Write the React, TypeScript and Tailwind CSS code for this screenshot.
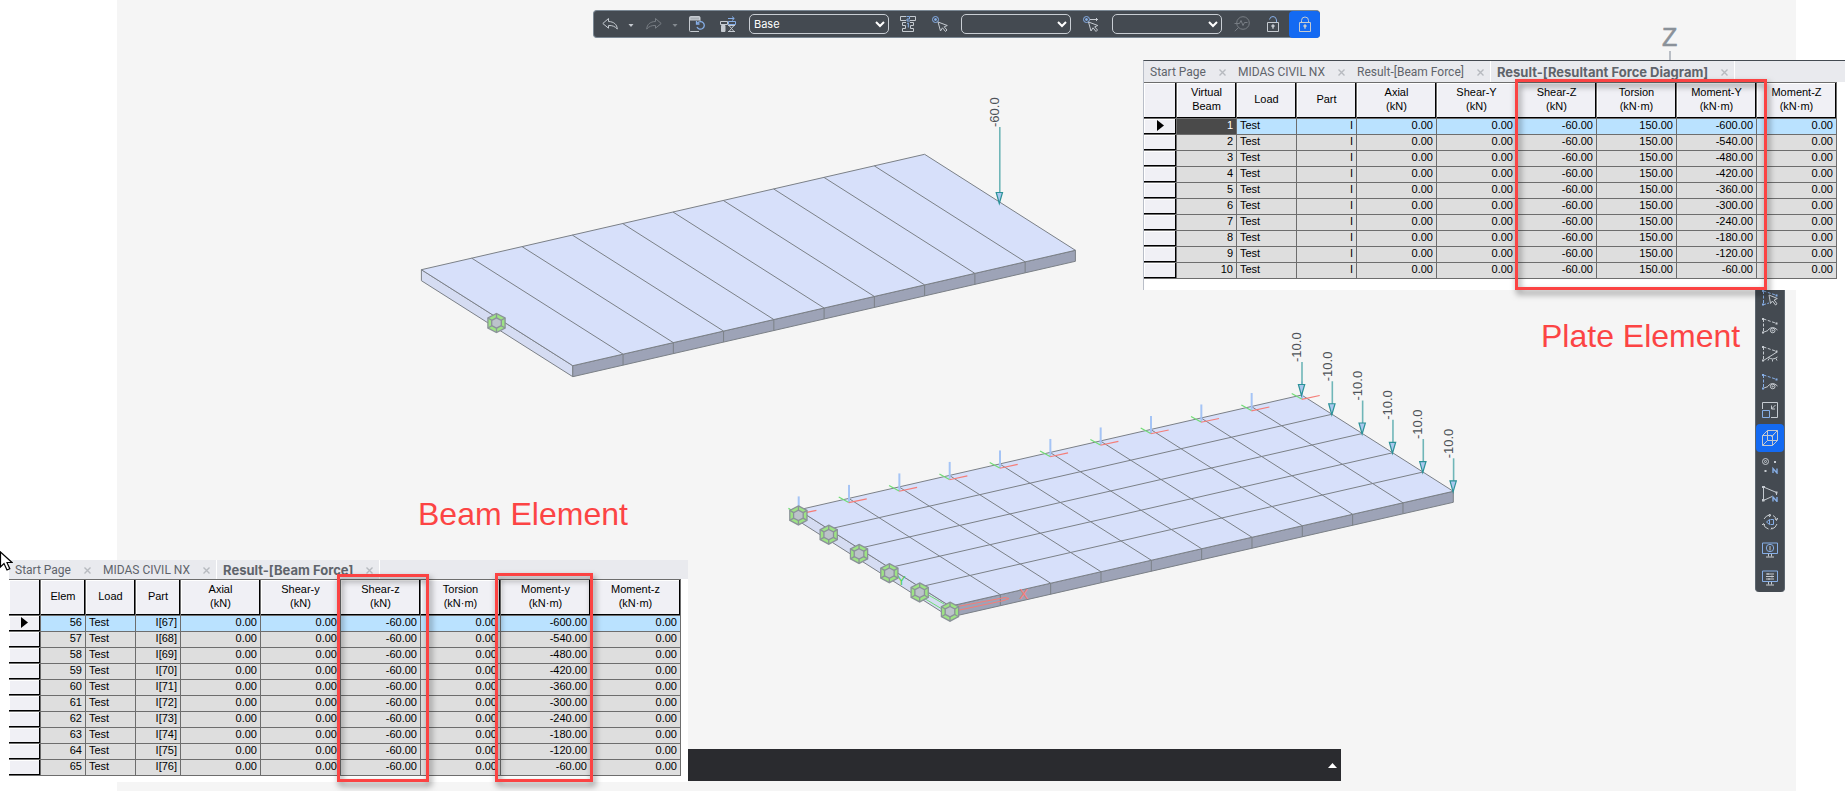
import type { ReactNode } from "react"
import clsx from "clsx"

interface IColumn {
  title: string
  unit?: string
  width: string
  align?: string
}

interface IResultTableProps {
  label: string
  columns: IColumn[]
  rows: string[][]
  headWidth: string
  darkFirstCell?: boolean
}

interface ITabsProps {
  tabs: string[]
  active: string
}

interface IPoint {
  x: number
  y: number
}

const moments = ["-600.00", "-540.00", "-480.00", "-420.00", "-360.00", "-300.00", "-240.00", "-180.00", "-120.00", "-60.00"]

const beamColumns: IColumn[] = [
  { title: "Elem", width: "w-[45px]" },
  { title: "Load", width: "w-[50px]", align: "text-left" },
  { title: "Part", width: "w-[45px]" },
  { title: "Axial", unit: "(kN)", width: "w-20" },
  { title: "Shear-y", unit: "(kN)", width: "w-20" },
  { title: "Shear-z", unit: "(kN)", width: "w-20" },
  { title: "Torsion", unit: "(kN·m)", width: "w-20" },
  { title: "Moment-y", unit: "(kN·m)", width: "w-[90px]" },
  { title: "Moment-z", unit: "(kN·m)", width: "w-[90px]" },
]

const plateColumns: IColumn[] = [
  { title: "Virtual", unit: "Beam", width: "w-[60px]" },
  { title: "Load", width: "w-[60px]", align: "text-left" },
  { title: "Part", width: "w-[60px]" },
  { title: "Axial", unit: "(kN)", width: "w-20" },
  { title: "Shear-Y", unit: "(kN)", width: "w-20" },
  { title: "Shear-Z", unit: "(kN)", width: "w-20" },
  { title: "Torsion", unit: "(kN·m)", width: "w-20" },
  { title: "Moment-Y", unit: "(kN·m)", width: "w-20" },
  { title: "Moment-Z", unit: "(kN·m)", width: "w-20" },
]

const beamRows = moments.map((m, i) => [`${56 + i}`, "Test", `I[${67 + i}]`, "0.00", "0.00", "-60.00", "0.00", m, "0.00"])
const plateRows = moments.map((m, i) => [`${i + 1}`, "Test", "I", "0.00", "0.00", "-60.00", "150.00", m, "0.00"])

const headEdge = "bg-[#f0f0f5] border-r border-b border-[#6d6d6d] shadow-[inset_-1px_-1px_0_#000,inset_1px_1px_0_#fff]"

const ResultTable = ({ label, columns, rows, headWidth, darkFirstCell }: IResultTableProps) => {
  return (
    <table
      aria-label={label}
      className="table-fixed border-separate border-spacing-0 border-t border-[#6d6d6d] font-['Liberation_Sans',Arial,sans-serif] text-[11px]/[14px] text-black"
    >
      <colgroup>
        <col className={headWidth} />
        {columns.map((c) => <col key={c.title} className={c.width} />)}
      </colgroup>
      <thead>
        <tr className="h-9">
          <th className={headEdge} />
          {columns.map((c) => (
            <th key={c.title} className={clsx("px-0 pt-0 pb-[3px] font-normal text-center align-middle", headEdge)}>
              {c.title}
              {c.unit && <span className="block">{c.unit}</span>}
            </th>
          ))}
        </tr>
      </thead>
      <tbody>
        {rows.map((row, i) => (
          <tr key={row[0]} className={clsx("h-4", i === 0 ? "bg-[#bae2ff]" : "bg-[#dedede]")}>
            <th className={clsx("px-0 pt-0 pb-0.5", headEdge)}>
              {i === 0 && (
                <svg viewBox="0 0 6 10" preserveAspectRatio="none" className="mx-auto h-[11px] w-[7px]"><path d="M0 0L6 5L0 10Z" /></svg>
              )}
            </th>
            {row.map((value, j) => (
              <td
                key={j}
                className={clsx(
                  "h-4 border-r border-b border-[#6d6d6d] px-[3px] pt-0 pb-0.5 leading-[13px]",
                  columns[j].align ?? "text-right",
                  darkFirstCell && i === 0 && j === 0 && "bg-[#4a4a4a] text-white",
                )}
              >
                {value}
              </td>
            ))}
          </tr>
        ))}
      </tbody>
    </table>
  )
}

const Tabs = ({ tabs, active }: ITabsProps) => {
  return (
    <div role="tablist" className="flex grow items-stretch bg-[#e9eaee] text-[#5f646b]">
      {tabs.map((tab) => (
        <div
          key={tab}
          className={clsx(
            "flex items-center gap-[13px] px-1.5",
            tab === active ? "border-x border-white font-[Inter,sans-serif] text-[13px]/[18px] font-bold" : "font-[Roboto,sans-serif] text-[12px]/[18px]",
          )}
        >
          <button role="tab" aria-selected={tab === active} className="whitespace-nowrap">{tab}</button>
          <button aria-label={`Close ${tab}`} className="mt-0.5 text-[#b7babf]">
            <svg viewBox="0 0 7 7" className="size-[7px]" fill="none" stroke="currentColor" strokeWidth="1.4">
              <path d="M.5 .5L6.5 6.5M6.5 .5L.5 6.5" />
            </svg>
          </button>
        </div>
      ))}
    </div>
  )
}

const Highlight = ({ className }: { className: string }) => (
  <div className={clsx("absolute border-3 border-[#fb4343] drop-shadow-[2px_4px_3px_rgba(0,0,0,0.5)]", className)} />
)

const Icon = ({ children }: { children: ReactNode }) => (
  <svg viewBox="0 0 16 16" className="size-4" fill="none" stroke="#c5cad0" strokeWidth="1">{children}</svg>
)

const blue = "#86aee6"

const UndoPath = () => <path d="M6.500 2.500L.8 7.500L6.500 12.200V9.500C10.500 9.300 13 10.500 15.300 13C15 8.500 12 5.700 6.500 5.500Z" />

const ToolButton = ({ label, className, children }: { label: string; className?: string; children: ReactNode }) => (
  <button aria-label={label} className={clsx("shrink-0", className)}>{children}</button>
)

const Caret = ({ className, label }: { className: string; label: string }) => (
  <button aria-label={label} className={clsx("w-2 shrink-0", className)}>
    <svg viewBox="0 0 8 5" className="mx-auto mt-0.5 h-[5px] w-2" fill="currentColor"><path d="M1.500 1H6.500L4 4Z" /></svg>
  </button>
)

const selectStyle = "h-5 shrink-0 rounded-[5px] border border-[#c9ced4] bg-[#444a51] text-[11px]/[18px] text-white"

const Toolbar = () => {
  return (
    <header className="mx-auto mt-2.5 flex h-7 w-[727px] items-center rounded-[4px] border-y border-l border-[#7b8894] bg-[#444a51] font-[Inter,sans-serif]">
      <ToolButton label="Undo" className="ml-2"><Icon><UndoPath /></Icon></ToolButton>
      <Caret label="Undo history" className="ml-[9px] text-[#c5cad0]" />
      <ToolButton label="Redo" className="ml-[11px] -scale-x-100 opacity-40"><Icon><UndoPath /></Icon></ToolButton>
      <Caret label="Redo history" className="ml-[9px] text-[#83898f]" />
      <ToolButton label="Refresh model" className="ml-2.5">
        <Icon>
          <path d="M1 1H10.500V4H1Z" fill="#a9afb5" />
          <path d="M11 5V1.500Q11 .5 10 .5H1.500Q.5 .5 .5 1.500V14.500Q.5 15.500 1.500 15.500H10" />
          <path d="M8 11A3.800 3.800 0 1 0 8.500 7M7.500 5V8H10.500" stroke={blue} strokeWidth="1.300" />
        </Icon>
      </ToolButton>
      <ToolButton label="Construction stage" className="ml-[15px]">
        <Icon>
          <path d="M.5 5.500H7.500V8.500H.5Z" />
          <path d="M8.500 5.500H15.500V8.500H8.500Z" stroke={blue} />
          <path d="M8 2.500H14M12 .5L14.300 2.500L12 4.500" stroke={blue} />
          <path d="M1.500 9.500H5V15.500H1.500Z" fill="#c5cad0" />
          <path d="M8 9.500H15M8 15.500H15M9 9.500L11.500 12.500L14 9.500M9 15.500L11.500 12.500L14 15.500" />
        </Icon>
      </ToolButton>
      <select aria-label="Stage" className={clsx("ml-[13px] w-[140px]", selectStyle)}><option>Base</option></select>
      <ToolButton label="Section stack" className="ml-[11px]">
        <Icon>
          <path d="M6 .5H.5V4.500H6M10 .5H15.500V4.500H10M6 6.500H2.500V9.500H5.500V12.500H2.500V15.500H13.500V12.500H10.500V9.500H13.500V6.500H10" />
          <path d="M6.500 .5H9.500V3H7V5H10M7 7.500L8.300 7V11.500" stroke={blue} />
        </Icon>
      </ToolButton>
      <ToolButton label="Select node" className="ml-4">
        <Icon>
          <circle cx="3.500" cy="3.500" r="3" stroke={blue} />
          <circle cx="3.500" cy="3.500" r="1" fill={blue} stroke={blue} />
          <path d="M6 6L8.500 15L10.500 11.800L13.500 15.500L15 14L12.200 10.800L15.300 9.500Z" />
        </Icon>
      </ToolButton>
      <select aria-label="Node selection" className={clsx("ml-[13px] w-[110px]", selectStyle)} />
      <ToolButton label="Select element" className="ml-3">
        <Icon>
          <circle cx="3.500" cy="3.500" r="3" stroke={blue} />
          <circle cx="3.500" cy="3.500" r="1" fill={blue} stroke={blue} />
          <path d="M7 3.500H15M13.500 2V5M5.500 6L8 15L10 11.800L13 15.500L14.500 14L11.700 10.800L14.800 9.500Z" />
        </Icon>
      </ToolButton>
      <select aria-label="Element selection" className={clsx("ml-[13px] w-[110px]", selectStyle)} />
      <ToolButton label="Query result" className="ml-3 opacity-40">
        <Icon>
          <circle cx="9" cy="7" r="6.300" />
          <path d="M4.500 11.500L.8 15.200M.5 7.500H5.500L7 4.500L9 9.500L10.500 6.500H13.500" />
        </Icon>
      </ToolButton>
      <ToolButton label="Unlock" className="ml-[15px]">
        <Icon>
          <path d="M4.500 3.500Q5 .5 8 .5T11.500 4V6" stroke={blue} />
          <path d="M2.500 6.500H13.500V15.500H2.500Z" />
          <circle cx="8" cy="10" r="1.200" fill="#c5cad0" />
          <path d="M8 10V13" />
        </Icon>
      </ToolButton>
      <ToolButton label="Lock" className="ml-2 flex h-[27px] w-[31px] items-center justify-center rounded-[4px] bg-[#146af2]">
        <Icon>
          <path d="M4.500 6.500V4.500Q4.500 1 8 1T11.500 4.500V6.500" />
          <path d="M2.500 6.500H13.500V15.500H2.500Z" />
          <circle cx="8" cy="10" r="1.200" fill="#c5cad0" />
          <path d="M8 10V13" />
        </Icon>
      </ToolButton>
    </header>
  )
}

const Triangle = ({ stroke }: { stroke?: string }) => (
  <>
    <path d="M1.500 1V14.500M1.500 1L15 5.500" stroke={stroke} strokeDasharray="3 1.500" />
    <path d="M0 0H2V2H0ZM0 13.500H2V15.500H0ZM13.500 4.500H15.500V6.500H13.500Z" fill={stroke ?? "#c5cad0"} stroke="none" />
  </>
)

const Eye = () => (
  <>
    <path d="M2 14L6 12.500M6 12Q10.500 7 15.500 12" />
    <circle cx="10.700" cy="12.500" r="2.300" />
    <circle cx="10.700" cy="12.500" r=".6" />
  </>
)

const railItems: { label: string; icon: ReactNode }[] = [
  {
    label: "Select by polygon",
    icon: <><Triangle stroke={blue} /><path d="M2 14.500L7 13" stroke={blue} strokeDasharray="2 1.500" /><path d="M7 5L8.500 13.500L10.500 11L13.500 15L15 13.800L12.200 10L15.300 8.500Z" /></>,
  },
  { label: "Activate", icon: <><Triangle /><Eye /></> },
  { label: "Deactivate", icon: <><Triangle /><path d="M1.500 14.500L15 6M6 11Q10.500 15 15.500 11M7 12.500L6 14.500M10.500 13.500V15.500M14 12.500L15 14.500" /></> },
  { label: "Activate inverse", icon: <><Triangle stroke={blue} /><Eye /></> },
  { label: "Zoom fit", icon: <><path d="M.5 7V.5H15.500V15.500H9M13.500 3L9.500 7M9.500 3.500V7H13" /><path d="M.5 8.500H7.500V15.500H.5Z" stroke={blue} /></> },
  { label: "Hidden view", icon: <path d="M.5 5.500H10.500V15.500H.5ZM.5 5.500L5.500 .5H15.500V10.500L10.500 15.500M5.500 .5V10.500H15.500M.5 15.500L5.500 10.500M10.500 5.500L15.500 .5M8 5L10 6.500L13 3" /> },
  {
    label: "Node number",
    icon: <><circle cx="3.500" cy="3.500" r="3" /><circle cx="3.500" cy="3.500" r="1" /><path d="M12 3H14V5H12ZM2.500 12H4.500V14H2.500Z" fill="#c5cad0" stroke="none" /><path d="M11 15V10.500L15 15V10.500" stroke={blue} strokeWidth="1.400" /></>,
  },
  {
    label: "Element number",
    icon: <><path d="M10 10.500L1.500 14.500V1L14.500 6.500V9" /><path d="M0 0H3V2H0ZM0 13H2.500V15.500H0ZM13.500 5.500H15.500V7.500H13.500Z" fill="#c5cad0" stroke="none" /><path d="M11 15.500V11L15 15.500V11" stroke={blue} strokeWidth="1.400" /></>,
  },
  {
    label: "Rotate view",
    icon: <><path d="M2 5Q4 1 8.500 1M11 1.500Q14 3 14.500 6M15 10Q13.500 14 10 15M6.500 15Q2.500 14 1.500 10M6.500 0L9 1.200L7 3M13 4.500L14.500 6.500L15.800 4M10 13.500L9 15.500M0 11L1.500 9.500L3 11" /><path d="M7.500 5.500V10.500L4.500 8ZM8.500 5.500H11.500V10.500H8.500" stroke={blue} /></>,
  },
  {
    label: "Display",
    icon: <><path d="M.5 1H15.500V11.500H.5Z" stroke={blue} /><circle cx="8" cy="6" r="3.700" stroke={blue} /><path d="M8 4V8.500" /><path d="M6.500 12V14.500M9.500 12V14.500M4 15H12" /></>,
  },
  {
    label: "Display options",
    icon: <><path d="M.5 1H15.500V11.500H.5Z" stroke={blue} /><path d="M4 4H12M4 6.500H12M4 9H12M6 3V5M10 5.500V7.500M7 8V10" /><path d="M6.500 12V14.500M9.500 12V14.500M4 15H12" /></>,
  },
]

const ViewRail = () => (
  <nav className="mt-[246px] mr-[11px] flex w-[30px] flex-col self-start rounded-b-[4px] border-x border-[#5d666f] bg-[#444a51]">
    {railItems.map((item) => (
      <button
        key={item.label}
        aria-label={item.label}
        className={clsx("flex h-7 items-center justify-center", item.label === "Hidden view" && "rounded-[4px] bg-[#146af2]")}
      >
        <Icon>{item.icon}</Icon>
      </button>
    ))}
  </nav>
)

const THICKNESS = 11

const lerp = (a: IPoint, b: IPoint, t: number): IPoint => ({ x: a.x + (b.x - a.x) * t, y: a.y + (b.y - a.y) * t })
const steps = (n: number) => Array.from({ length: n + 1 }, (_, i) => i / n)

// back-left, back-right, front-right and front-left corners of each deck
const beamDeck: IPoint[] = [{ x: 421.4, y: 269.7 }, { x: 924.6, y: 154.3 }, { x: 1075.4, y: 250.3 }, { x: 572.8, y: 365.7 }]
const plateDeck: IPoint[] = [{ x: 798.4, y: 509.9 }, { x: 1301.7, y: 395 }, { x: 1453.3, y: 491.3 }, { x: 950, y: 606.2 }]

const Deck = ({ corners, strips }: { corners: IPoint[]; strips: number }) => {
  const [a, b, c, d] = corners
  const line = (p: IPoint, q: IPoint, key: string) => <line key={key} x1={p.x} y1={p.y} x2={q.x} y2={q.y} />
  return (
    <g stroke="#7b8087" strokeWidth="1">
      <path d={`M${a.x} ${a.y}L${d.x} ${d.y}v${THICKNESS}L${a.x} ${a.y + THICKNESS}Z`} fill="#d5dcf2" />
      <path d={`M${d.x} ${d.y}L${c.x} ${c.y}v${THICKNESS}L${d.x} ${d.y + THICKNESS}Z`} fill="#9da3b7" />
      <path d={`M${a.x} ${a.y}L${b.x} ${b.y}L${c.x} ${c.y}L${d.x} ${d.y}Z`} fill="#d7e0fa" />
      {steps(10).slice(1, -1).map((t) => {
        const front = lerp(d, c, t)
        return [line(lerp(a, b, t), front, `t${t}`), line(front, { x: front.x, y: front.y + THICKNESS }, `s${t}`)]
      })}
      {steps(strips).slice(1, -1).map((t) => line(lerp(a, d, t), lerp(b, c, t), `r${t}`))}
    </g>
  )
}

const Support = ({ x, y }: IPoint) => (
  <g transform={`translate(${x} ${y})`} stroke="#8b9299" strokeWidth="1.300">
    <path d="M0 -9.500L8.600 -5V5L0 9.500L-8.600 5V-5Z" fill="#9de384" />
    <path d="M0 -9.500V9.500M8.600 -5L-8.600 5M8.600 5L-8.600 -5" />
    <path d="M0 -5.200L4.800 -2.700V2.700L0 5.200L-4.800 2.700V-2.700Z" fill="#bcc3cb" />
  </g>
)

const Load = ({ x, y, length, value }: IPoint & { length: number; value: string }) => (
  <g transform={`translate(${x} ${y})`}>
    <path d={`M.3 ${-length}V-10`} stroke="#6fb6b8" strokeWidth="1.600" />
    <path d="M-3.300 -10.500H3L-.2 .5Z" fill="#a9c8ee" stroke="#2b9298" strokeWidth="1.200" />
    <text transform={`translate(-.5 ${-length}) rotate(-90)`} fontSize="13" fill="#4d5358">{value}</text>
  </g>
)

const NodeAxis = ({ x, y }: IPoint) => (
  <g transform={`translate(${x} ${y + 4})`} fill="none">
    <path d="M.3 0V-17.500" stroke="#a5c4f5" strokeWidth="2" />
    <path d="M0 0L-10 -5.500" stroke="#6fdc74" strokeWidth="1.200" />
    <path d="M0 .3L18 -3.500" stroke="#f57d77" strokeWidth="1.200" />
  </g>
)

const ModelView = () => {
  const [a, b, c, d] = plateDeck
  return (
    <svg viewBox="0 0 1845 791" className="absolute inset-0 size-full font-['Liberation_Sans',Arial,sans-serif]">
      <text x="1662" y="46" fontSize="25" fill="#8a9199" stroke="#8a9199" strokeWidth=".6">Z</text>
      <path d="M1670 51V66" stroke="#b9bec5" strokeWidth="2" />
      <Deck corners={beamDeck} strips={1} />
      <Support x={496.5} y={323} />
      <Load x={999.5} y={203} length={76} value="-60.0" />
      <Deck corners={plateDeck} strips={5} />
      {steps(10).map((t) => <NodeAxis key={t} {...lerp(a, b, t)} />)}
      {steps(5).map((t) => <Load key={t} {...lerp(b, c, t)} length={33} value="-10.0" />)}
      <path d="M925 593L944 604M922 597L942 609" stroke="#6fdc74" />
      <path d="M955 607L1005 597.500L1009 598.500L1004 600.500L955 611" fill="none" stroke="#f57d77" />
      <text x="897" y="585" fontSize="13" fill="#4fd05a">Y</text>
      <text x="1019" y="599" fontSize="14" fill="#f57d77">X</text>
      {steps(5).map((t) => {
        const p = lerp(a, d, t)
        return <Support key={t} x={p.x} y={p.y + THICKNESS / 2} />
      })}
      <text x="418" y="525" fontSize="32" fill="#fc4444">Beam Element</text>
      <text x="1541" y="347" fontSize="32" fill="#fc4444">Plate Element</text>
    </svg>
  )
}

const App = () => {
  return (
    <div className="relative min-h-screen overflow-hidden bg-white pr-[49px] pl-[117px]">
      <main className="flex min-h-screen flex-col bg-[#f5f5f5]">
        <ModelView />
        <div className="relative"><Toolbar /></div>
        <div className="relative flex grow justify-end"><ViewRail /></div>
        <footer className="relative mx-auto mb-2.5 flex h-8 w-[769px] items-center justify-end bg-[#2a2b2f] pr-1">
          <button aria-label="Expand message window">
            <svg viewBox="0 0 9 5" className="h-[5px] w-[9px]" fill="#fff"><path d="M0 5L4.500 0L9 5Z" /></svg>
          </button>
        </footer>
      </main>

      <section className="absolute top-[60px] right-0 flex w-[702px] flex-col border-t border-l border-t-[#444a51] border-l-[#b9bec8] bg-white pb-[11px]">
        <div className="flex h-[21px]">
          <Tabs
            tabs={["Start Page", "MIDAS CIVIL NX", "Result-[Beam Force]", "Result-[Resultant Force Diagram]"]}
            active="Result-[Resultant Force Diagram]"
          />
        </div>
        <div className="w-[693px]">
          <ResultTable label="Resultant force diagram" columns={plateColumns} rows={plateRows} headWidth="w-[33px]" darkFirstCell />
        </div>
        <Highlight className="top-[18px] left-[371px] h-[211px] w-[252px]" />
      </section>

      <section className="absolute bottom-[9px] left-[9px] flex w-[679px] flex-col bg-white pb-1.5">
        <div className="flex h-[19px]">
          <Tabs tabs={["Start Page", "MIDAS CIVIL NX", "Result-[Beam Force]"]} active="Result-[Beam Force]" />
        </div>
        <div className="w-[672px]">
          <ResultTable label="Beam force" columns={beamColumns} rows={beamRows} headWidth="w-8" />
        </div>
        <Highlight className="top-[14px] left-[328px] h-[208px] w-[92px]" />
        <Highlight className="top-[13px] left-[486px] h-[209px] w-[98px]" />
      </section>

      <svg viewBox="0 0 13 20" className="absolute bottom-[220px] left-0 h-5 w-[13px]">
        <path d="M.5 1V16L4 12.500L7 19L9.800 17.800L7 11.500H12Z" fill="#fff" stroke="#000" strokeWidth="1.200" />
      </svg>
    </div>
  )
}

export default App
